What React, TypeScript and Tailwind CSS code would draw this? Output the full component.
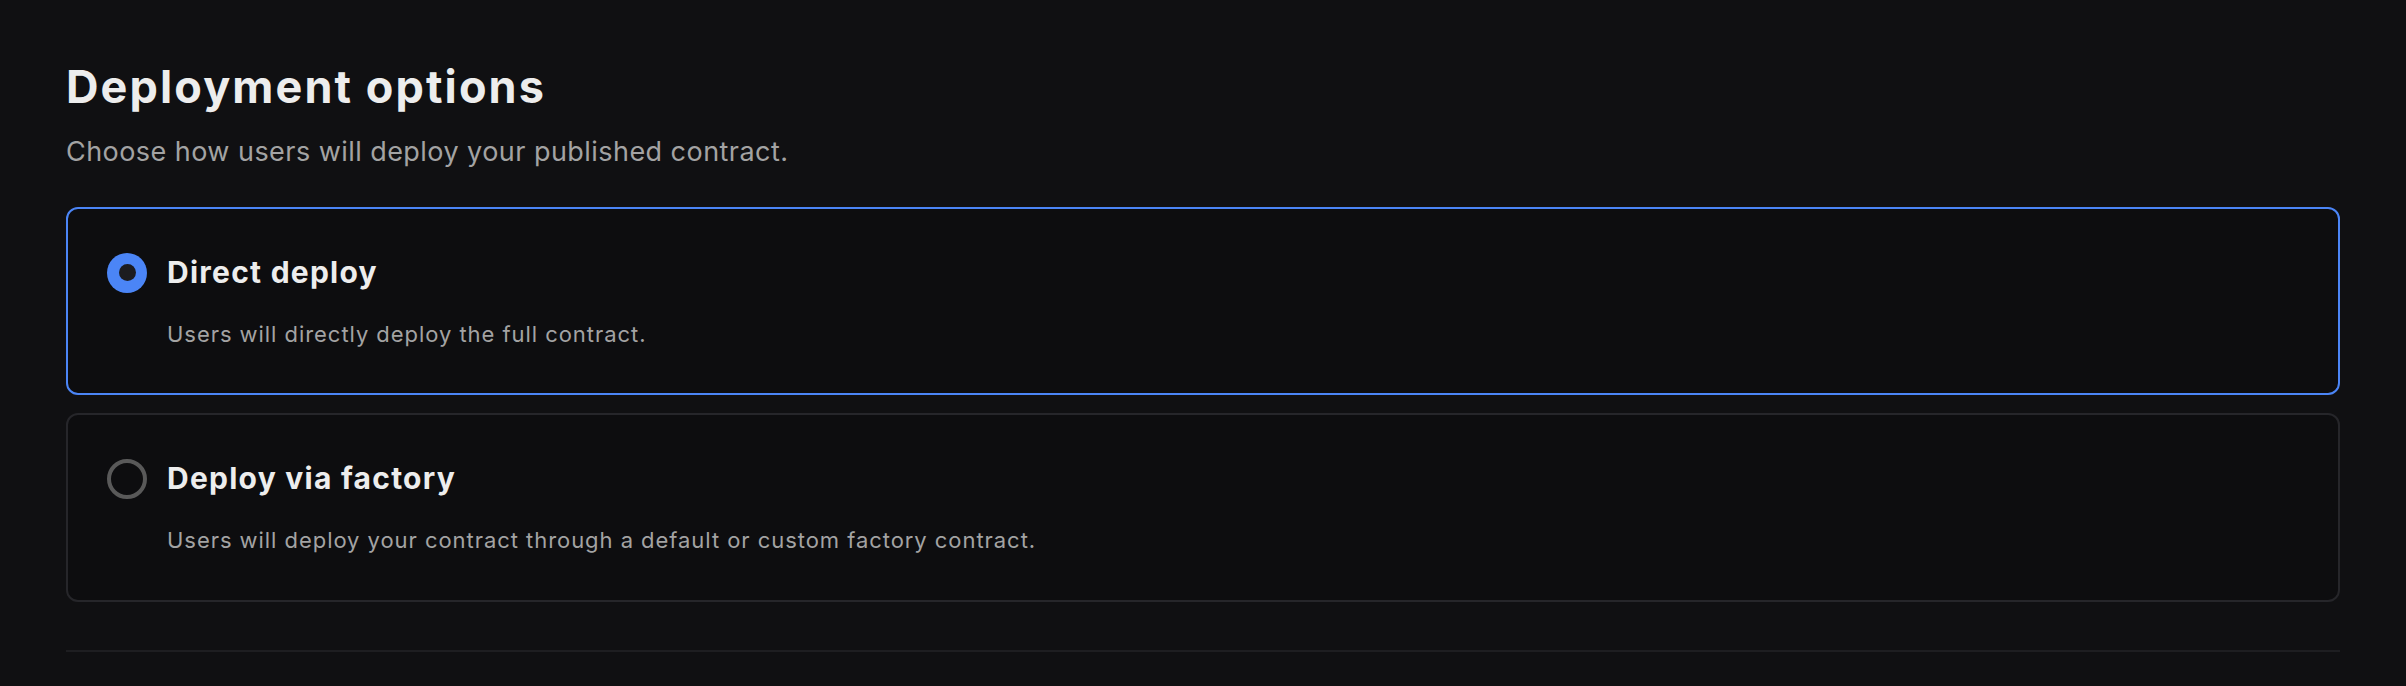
import React, { useState } from 'react';

type Option = {
  id: string;
  title: string;
  description: string;
};

const options: Option[] = [
  {
    id: 'direct',
    title: 'Direct deploy',
    description: 'Users will directly deploy the full contract.',
  },
  {
    id: 'factory',
    title: 'Deploy via factory',
    description: 'Users will deploy your contract through a default or custom factory contract.',
  },
];

function Radio({ checked }: { checked: boolean }) {
  if (checked) {
    return (
      <span className="flex h-[40px] w-[40px] shrink-0 items-center justify-center rounded-full bg-[#4b85f6]">
        <span className="h-[17px] w-[17px] rounded-full bg-[#1c1c20]" />
      </span>
    );
  }
  return <span className="h-[40px] w-[40px] shrink-0 rounded-full border-[4px] border-[#595959]" />;
}

export default function App() {
  const [selected, setSelected] = useState('direct');

  return (
    <div className="min-h-screen bg-[#101012] px-[66px] pt-[60px] font-['Inter','Liberation_Sans',sans-serif]">
      <h2 className="text-[45px] font-bold leading-[54px] tracking-[2.1px] text-[#ededed]">
        Deployment options
      </h2>
      <p className="mt-[18px] text-[27px] leading-[40px] tracking-[0.45px] text-[#a3a3a3]">
        Choose how users will deploy your published contract.
      </p>

      <div className="mt-[35px] flex flex-col gap-[18px]">
        {options.map((opt) => {
          const active = selected === opt.id;
          return (
            <button
              key={opt.id}
              type="button"
              onClick={() => setSelected(opt.id)}
              className={
                active
                  ? 'rounded-[12px] border-2 border-[#4b85f6] bg-[#0d0d0f] pb-[42px] pl-[39px] pr-[39px] pt-[41px] text-left'
                  : 'rounded-[12px] border-2 border-[#26262a] bg-[#0d0d0f] pb-[43px] pl-[39px] pr-[39px] pt-[41px] text-left'
              }
            >
              <div className="flex h-[45px] items-center gap-[20px]">
                <Radio checked={active} />
                <span className="text-[30px] font-bold leading-[45px] tracking-[1.25px] text-[#ededed]">
                  {opt.title}
                </span>
              </div>
              <p className="mt-[23px] pl-[60px] text-[22px] leading-[33px] tracking-[0.95px] text-[#a3a3a3]">
                {opt.description}
              </p>
            </button>
          );
        })}
      </div>

      <div className="mt-[48px] h-[2px] bg-[#1e1e21]" />
    </div>
  );
}
